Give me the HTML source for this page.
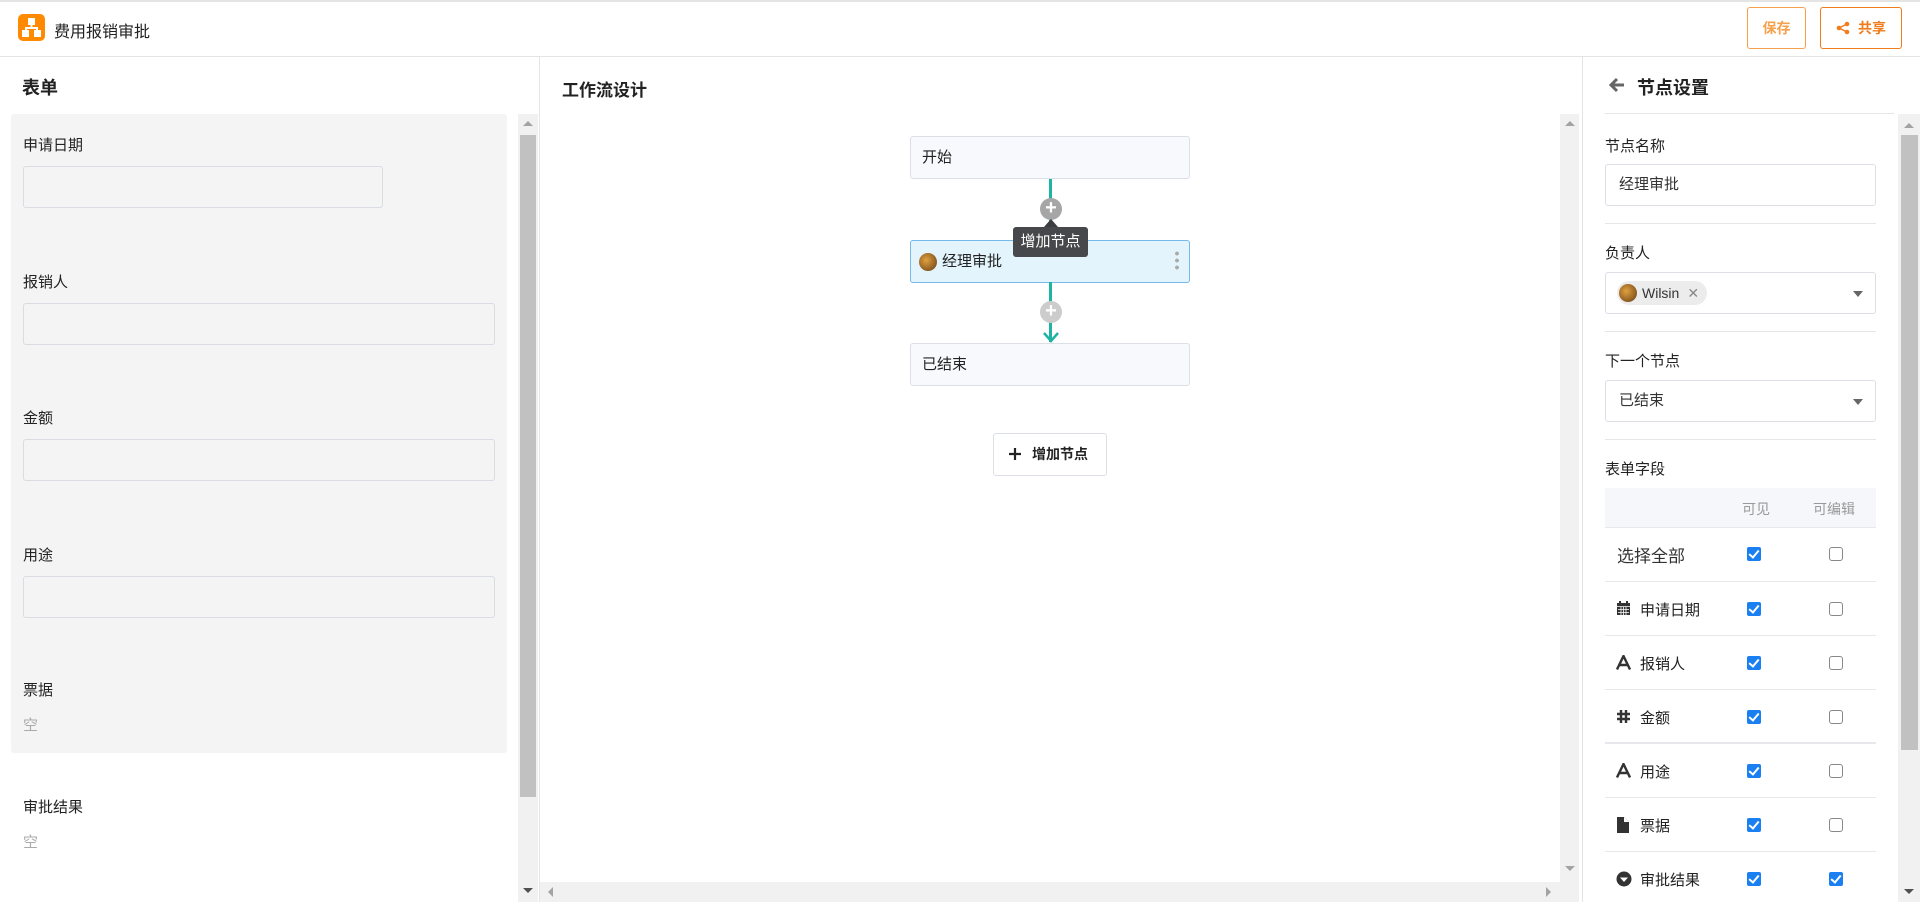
<!DOCTYPE html>
<html><head><meta charset="utf-8"><style>
*{box-sizing:border-box;margin:0;padding:0}
body{width:1920px;height:902px;overflow:hidden;background:#fff;font-family:"Liberation Sans","Noto Sans CJK SC",sans-serif;color:#222;position:relative;font-size:15px}
.a{position:absolute}
.hdr{left:0;top:0;width:1920px;height:57px;border-top:2px solid #e4e4e4;border-bottom:1px solid #e4e4e4;background:#fff}
.btn{border:1px solid #f5a04a;border-radius:3px;color:#f5a04a;font-weight:bold;font-size:14px;display:flex;align-items:center;justify-content:center}
.lbl{font-size:15px;color:#222}
.inp{border:1px solid #d9dce3;border-radius:3px;background:#f4f4f4}
.sb{background:#f1f1f1}
.thumb{background:#c1c1c1}
.node{left:910px;width:280px;height:43px;border:1px solid #dcdfe6;border-radius:3px;background:#f8f9fd;padding-left:11px;line-height:41px;font-size:15px}
.rinp{left:1605px;width:271px;height:42px;border:1px solid #dcdfe6;border-radius:3px;background:#fff;font-size:15px;padding-left:13px;line-height:40px;color:#333}
.sep{left:1605px;width:271px;height:1px;background:#e4e6ea}
.row{left:1605px;width:271px;height:54px;border-bottom:1px solid #e6e8ec}
.cb{width:14px;height:14px;border-radius:2px}
.on{background:#1a7ff0}
.off{border:1.5px solid #888;background:#fff;border-radius:3px}
.tri{width:0;height:0;border-left:5px solid transparent;border-right:5px solid transparent;border-top:6px solid #666}
.on::after{content:"";position:absolute;left:4px;top:1px;width:4px;height:8px;border:solid #fff;border-width:0 2px 2px 0;transform:rotate(40deg)}
</style></head><body>
<div class="a hdr"></div>
<div class="a" style="left:18px;top:14px;width:27px;height:27px;background:#ff8a00;border-radius:5px">
<svg width="27" height="27" viewBox="0 0 27 27"><rect x="10" y="4" width="7" height="7" fill="#fff"/><path d="M13.5 11v3M8 17v-3h11v3" stroke="#fff" stroke-width="2" fill="none"/><rect x="4" y="16" width="7" height="7" fill="#fff"/><rect x="16" y="16" width="7" height="7" fill="#fff"/></svg></div>
<div class="a" style="left:54px;top:18px;font-size:16px;color:#222">费用报销审批</div>
<div class="a btn" style="left:1747px;top:7px;width:59px;height:42px">保存</div>
<div class="a btn" style="left:1820px;top:7px;width:82px;height:42px;border-color:#f07c1b;color:#f07c1b"><svg width="14" height="14" viewBox="0 0 14 14" style="margin-right:8px"><circle cx="11" cy="3" r="2.3" fill="#f07c1b"/><circle cx="3" cy="7" r="2.3" fill="#f07c1b"/><circle cx="11" cy="11" r="2.3" fill="#f07c1b"/><path d="M11 3L3 7l8 4" stroke="#f07c1b" stroke-width="1.5" fill="none"/></svg>共享</div>

<div class="a" style="left:539px;top:57px;width:1px;height:845px;background:#e4e4e4"></div>
<div class="a" style="left:22px;top:74px;font-size:18px;font-weight:bold">表单</div>
<div class="a" style="left:11px;top:114px;width:496px;height:639px;background:#f4f4f4;border-radius:3px"></div>
<div class="a lbl" style="left:23px;top:134px">申请日期</div>
<div class="a inp" style="left:23px;top:166px;width:360px;height:42px"></div>
<div class="a lbl" style="left:23px;top:271px">报销人</div>
<div class="a inp" style="left:23px;top:303px;width:472px;height:42px"></div>
<div class="a lbl" style="left:23px;top:407px">金额</div>
<div class="a inp" style="left:23px;top:439px;width:472px;height:42px"></div>
<div class="a lbl" style="left:23px;top:544px">用途</div>
<div class="a inp" style="left:23px;top:576px;width:472px;height:42px"></div>
<div class="a lbl" style="left:23px;top:679px">票据</div>
<div class="a lbl" style="left:23px;top:714px;color:#aaa">空</div>
<div class="a lbl" style="left:23px;top:796px">审批结果</div>
<div class="a lbl" style="left:23px;top:831px;color:#aaa">空</div>
<div class="a sb" style="left:518px;top:114px;width:20px;height:788px"></div>
<div class="a thumb" style="left:520px;top:135px;width:16px;height:662px"></div>
<div class="a" style="left:523px;top:121px;border-left:5px solid transparent;border-right:5px solid transparent;border-bottom:5px solid #a3a3a3"></div>
<div class="a" style="left:523px;top:888px;border-left:5px solid transparent;border-right:5px solid transparent;border-top:5px solid #505050"></div>

<div class="a" style="left:1582px;top:57px;width:1px;height:845px;background:#e4e4e4"></div>
<div class="a" style="left:562px;top:76px;font-size:17px;font-weight:bold">工作流设计</div>
<div class="a sb" style="left:1560px;top:114px;width:19px;height:768px"></div>
<div class="a" style="left:1565px;top:121px;border-left:5px solid transparent;border-right:5px solid transparent;border-bottom:5px solid #a3a3a3"></div>
<div class="a" style="left:1565px;top:866px;border-left:5px solid transparent;border-right:5px solid transparent;border-top:5px solid #a3a3a3"></div>
<div class="a sb" style="left:540px;top:882px;width:1039px;height:20px"></div>
<div class="a" style="left:548px;top:887px;border-top:5px solid transparent;border-bottom:5px solid transparent;border-right:5px solid #a3a3a3"></div>
<div class="a" style="left:1546px;top:887px;border-top:5px solid transparent;border-bottom:5px solid transparent;border-left:5px solid #a3a3a3"></div>

<div class="a node" style="top:136px">开始</div>
<div class="a" style="left:1049px;top:179px;width:3px;height:61px;background:#1fb3a3"></div>
<div class="a" style="left:1040px;top:198px;width:22px;height:22px;border-radius:50%;background:#a6a6a6;color:#fff;text-align:center;line-height:21px;font-size:20px;font-weight:bold">+</div>
<div class="a node" style="top:240px;background:#e3f4fd;border-color:#74b9ea;padding-left:0">
<div class="a" style="left:8px;top:12px;width:18px;height:18px;border-radius:50%;background:radial-gradient(circle at 40% 40%,#e0a040,#8a5a20 70%,#3a2a10)"></div>
<div class="a" style="left:31px;top:0">经理审批</div>
<div class="a" style="left:264px;top:9px;width:4px;height:20px;background:radial-gradient(circle,#aaa 1.8px,transparent 2px) 0 0/4px 7px"></div></div>
<div class="a" style="left:1051px;top:219px;border-left:7px solid transparent;border-right:7px solid transparent;border-bottom:8px solid #3b3d40;margin-left:-7px"></div>
<div class="a" style="left:1013px;top:227px;width:75px;height:30px;background:#46484b;border-radius:3px;color:#fff;font-size:15px;text-align:center;line-height:30px">增加节点</div>
<div class="a" style="left:1049px;top:282px;width:3px;height:60px;background:#1fb3a3"></div>
<div class="a" style="left:1040px;top:301px;width:22px;height:22px;border-radius:50%;background:#ccc;color:#fff;text-align:center;line-height:21px;font-size:20px;font-weight:bold">+</div>
<svg class="a" style="left:1042px;top:330px" width="18" height="14"><path d="M2 3l7 8 7-8" stroke="#1fb3a3" stroke-width="2.5" fill="none"/></svg>
<div class="a node" style="top:343px">已结束</div>
<div class="a" style="left:993px;top:433px;width:114px;height:43px;border:1px solid #dcdfe6;border-radius:3px;background:#fff;font-size:14px;font-weight:bold;line-height:41px;padding-left:38px">增加节点</div>
<svg class="a" style="left:1008px;top:447px" width="14" height="14"><path d="M7 1v12M1 7h12" stroke="#222" stroke-width="2.2"/></svg>

<svg class="a" style="left:1608px;top:76px" width="18" height="18" viewBox="0 0 18 18"><path d="M9 3L3 9l6 6M3 9h13" stroke="#666" stroke-width="3" fill="none"/></svg>
<div class="a" style="left:1637px;top:74px;font-size:18px;font-weight:bold">节点设置</div>
<div class="a sep" style="top:113px;width:289px"></div>
<div class="a sb" style="left:1898px;top:114px;width:22px;height:788px"></div>
<div class="a thumb" style="left:1901px;top:135px;width:17px;height:615px"></div>
<div class="a" style="left:1904px;top:123px;border-left:5px solid transparent;border-right:5px solid transparent;border-bottom:5px solid #a3a3a3"></div>
<div class="a" style="left:1904px;top:889px;border-left:5px solid transparent;border-right:5px solid transparent;border-top:5px solid #505050"></div>
<div class="a lbl" style="left:1605px;top:135px">节点名称</div>
<div class="a rinp" style="top:164px">经理审批</div>
<div class="a sep" style="top:223px"></div>
<div class="a lbl" style="left:1605px;top:242px">负责人</div>
<div class="a rinp" style="top:272px;padding-left:11px"><div style="display:inline-flex;align-items:center;height:24px;background:#ececec;border-radius:12px;padding:0 8px 0 2px;vertical-align:middle;font-size:14px;color:#333"><span style="width:18px;height:18px;border-radius:50%;background:radial-gradient(circle at 40% 40%,#e0a040,#8a5a20 70%,#3a2a10);margin-right:5px;display:inline-block"></span>Wilsin<span style="color:#888;margin-left:8px;font-size:14px">✕</span></div></div>
<div class="a tri" style="left:1853px;top:291px"></div>
<div class="a sep" style="top:331px"></div>
<div class="a lbl" style="left:1605px;top:350px">下一个节点</div>
<div class="a rinp" style="top:380px">已结束</div>
<div class="a tri" style="left:1853px;top:399px"></div>
<div class="a sep" style="top:439px"></div>
<div class="a lbl" style="left:1605px;top:458px">表单字段</div>
<div class="a" style="left:1605px;top:488px;width:271px;height:40px;background:#f6f7fb;border-bottom:1px solid #e6e8ec;font-size:14px;color:#999"><span class="a" style="left:137px;top:11px">可见</span><span class="a" style="left:208px;top:11px">可编辑</span></div>

<div class="a row" style="top:528px"><span class="a" style="left:12px;top:14px;font-size:17px;color:#333">选择全部</span><div class="a cb on" style="left:142px;top:19px"></div><div class="a cb off" style="left:224px;top:19px"></div></div>
<div class="a row" style="top:582px"><svg class="a" style="left:11px;top:19px" width="15" height="15" viewBox="0 0 15 15"><rect x="1" y="2" width="13" height="12" fill="#333"/><rect x="3" y="0" width="2" height="3" fill="#333"/><rect x="10" y="0" width="2" height="3" fill="#333"/><path d="M1 5.5h13M2 8.5h11M2 11.5h11M5 6v8M7.5 6v8M10 6v8" stroke="#fff" stroke-width=".8"/></svg><span class="a" style="left:35px;top:17px;font-size:15px">申请日期</span><div class="a cb on" style="left:142px;top:20px"></div><div class="a cb off" style="left:224px;top:20px"></div></div>
<div class="a row" style="top:636px"><svg class="a" style="left:11px;top:19px" width="15" height="15"><path d="M1 14.5L7.5 1 14 14.5M4 10h7" stroke="#333" stroke-width="2.4" fill="none"/></svg><span class="a" style="left:35px;top:17px;font-size:15px">报销人</span><div class="a cb on" style="left:142px;top:20px"></div><div class="a cb off" style="left:224px;top:20px"></div></div>
<div class="a row" style="top:690px;border-bottom:2px solid #e6e8ec"><svg class="a" style="left:11px;top:19px" width="15" height="15"><path d="M5 1v13M10 1v13M1 5h13M1 10h13" stroke="#333" stroke-width="2.4"/></svg><span class="a" style="left:35px;top:17px;font-size:15px">金额</span><div class="a cb on" style="left:142px;top:20px"></div><div class="a cb off" style="left:224px;top:20px"></div></div>
<div class="a row" style="top:744px"><svg class="a" style="left:11px;top:19px" width="15" height="15"><path d="M1 14.5L7.5 1 14 14.5M4 10h7" stroke="#333" stroke-width="2.4" fill="none"/></svg><span class="a" style="left:35px;top:17px;font-size:15px">用途</span><div class="a cb on" style="left:142px;top:20px"></div><div class="a cb off" style="left:224px;top:20px"></div></div>
<div class="a row" style="top:798px"><svg class="a" style="left:12px;top:19px" width="12" height="16"><path d="M0 0h7l5 5v11H0z" fill="#333"/><path d="M7 0v5h5" fill="#fff"/></svg><span class="a" style="left:35px;top:17px;font-size:15px">票据</span><div class="a cb on" style="left:142px;top:20px"></div><div class="a cb off" style="left:224px;top:20px"></div></div>
<div class="a row" style="top:852px;border:none"><svg class="a" style="left:11px;top:19px" width="16" height="16"><circle cx="8" cy="8" r="7.5" fill="#333"/><path d="M4 6.5h8L8 11z" fill="#fff"/></svg><span class="a" style="left:35px;top:17px;font-size:15px">审批结果</span><div class="a cb on" style="left:142px;top:20px"></div><div class="a cb on" style="left:224px;top:20px"></div></div>
</body></html>
